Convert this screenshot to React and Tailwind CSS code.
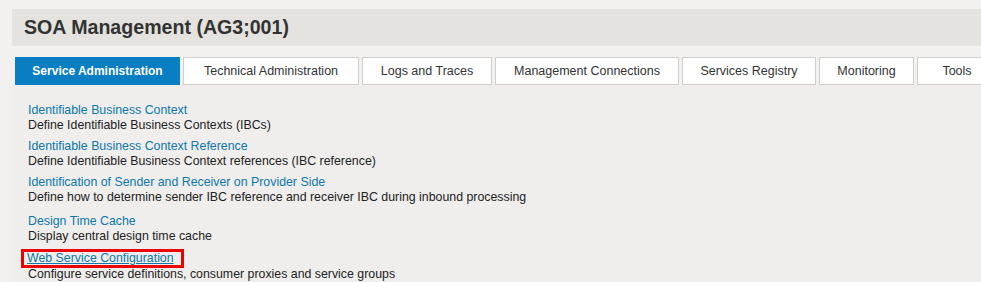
import React from 'react';

const tabs = [
  { label: 'Service Administration', width: 'w-[165px]', active: true },
  { label: 'Technical Administration', width: 'w-[176px]' },
  { label: 'Logs and Traces', width: 'w-[130px]' },
  { label: 'Management Connections', width: 'w-[184px]' },
  { label: 'Services Registry', width: 'w-[134px]' },
  { label: 'Monitoring', width: 'w-[95px]' },
  { label: 'Tools', width: 'w-[80px]' },
];

const items = [
  { title: 'Identifiable Business Context', desc: 'Define Identifiable Business Contexts (IBCs)', gap: 'mt-0' },
  { title: 'Identifiable Business Context Reference', desc: 'Define Identifiable Business Context references (IBC reference)', gap: 'mt-[6px]' },
  { title: 'Identification of Sender and Receiver on Provider Side', desc: 'Define how to determine sender IBC reference and receiver IBC during inbound processing', gap: 'mt-[6px]' },
  { title: 'Design Time Cache', desc: 'Display central design time cache', gap: 'mt-[9px]' },
  { title: 'Web Service Configuration', desc: 'Configure service definitions, consumer proxies and service groups', gap: 'mt-[5px]', marked: true },
];

const App = () => {
  return (
    <div className="w-[981px] h-[282px] overflow-hidden bg-[#f2f1ef] font-['Liberation_Sans',Arial,sans-serif]">
      {/* Title bar */}
      <div className="pt-[9px] pl-[12px]">
        <div className="h-[37px] bg-[#e4e3df] flex items-center pl-[12px]">
          <h1 className="text-[19.6px] font-bold text-[#333333]">SOA Management (AG3;001)</h1>
        </div>
      </div>

      {/* Tabs */}
      <div className="mt-[11px] pl-[15px] flex gap-[3px] whitespace-nowrap">
        {tabs.map((tab) => (
          <div
            key={tab.label}
            className={`${tab.width} shrink-0 h-[28px] flex items-center justify-center ${
              tab.active
                ? 'bg-[#0a7ec2] text-white font-bold text-[12px]'
                : 'bg-white text-[#333333] border border-[#cfcecb] text-[12.5px]'
            }`}
          >
            {tab.label}
          </div>
        ))}
      </div>

      {/* Content */}
      <div className="ml-[12px] bg-[#efeeec] h-[200px] pl-[16px] pt-[18px] text-[12.35px] leading-[15px]">
        {items.map((item) => (
          <div key={item.title} className={item.gap}>
            {item.marked ? (
              <div className="ml-[-7px] w-[163px] h-[19px] border-[3px] border-[#ee0000] pl-[3px] flex items-center">
                <a className="text-[#0b77ab] underline underline-offset-1">{item.title}</a>
              </div>
            ) : (
              <a className="text-[#0b77ab] block">{item.title}</a>
            )}
            <p className={`text-[#222222] ${item.marked ? 'mt-[-1px]' : ''}`}>{item.desc}</p>
          </div>
        ))}
      </div>
    </div>
  );
};

export default App;
